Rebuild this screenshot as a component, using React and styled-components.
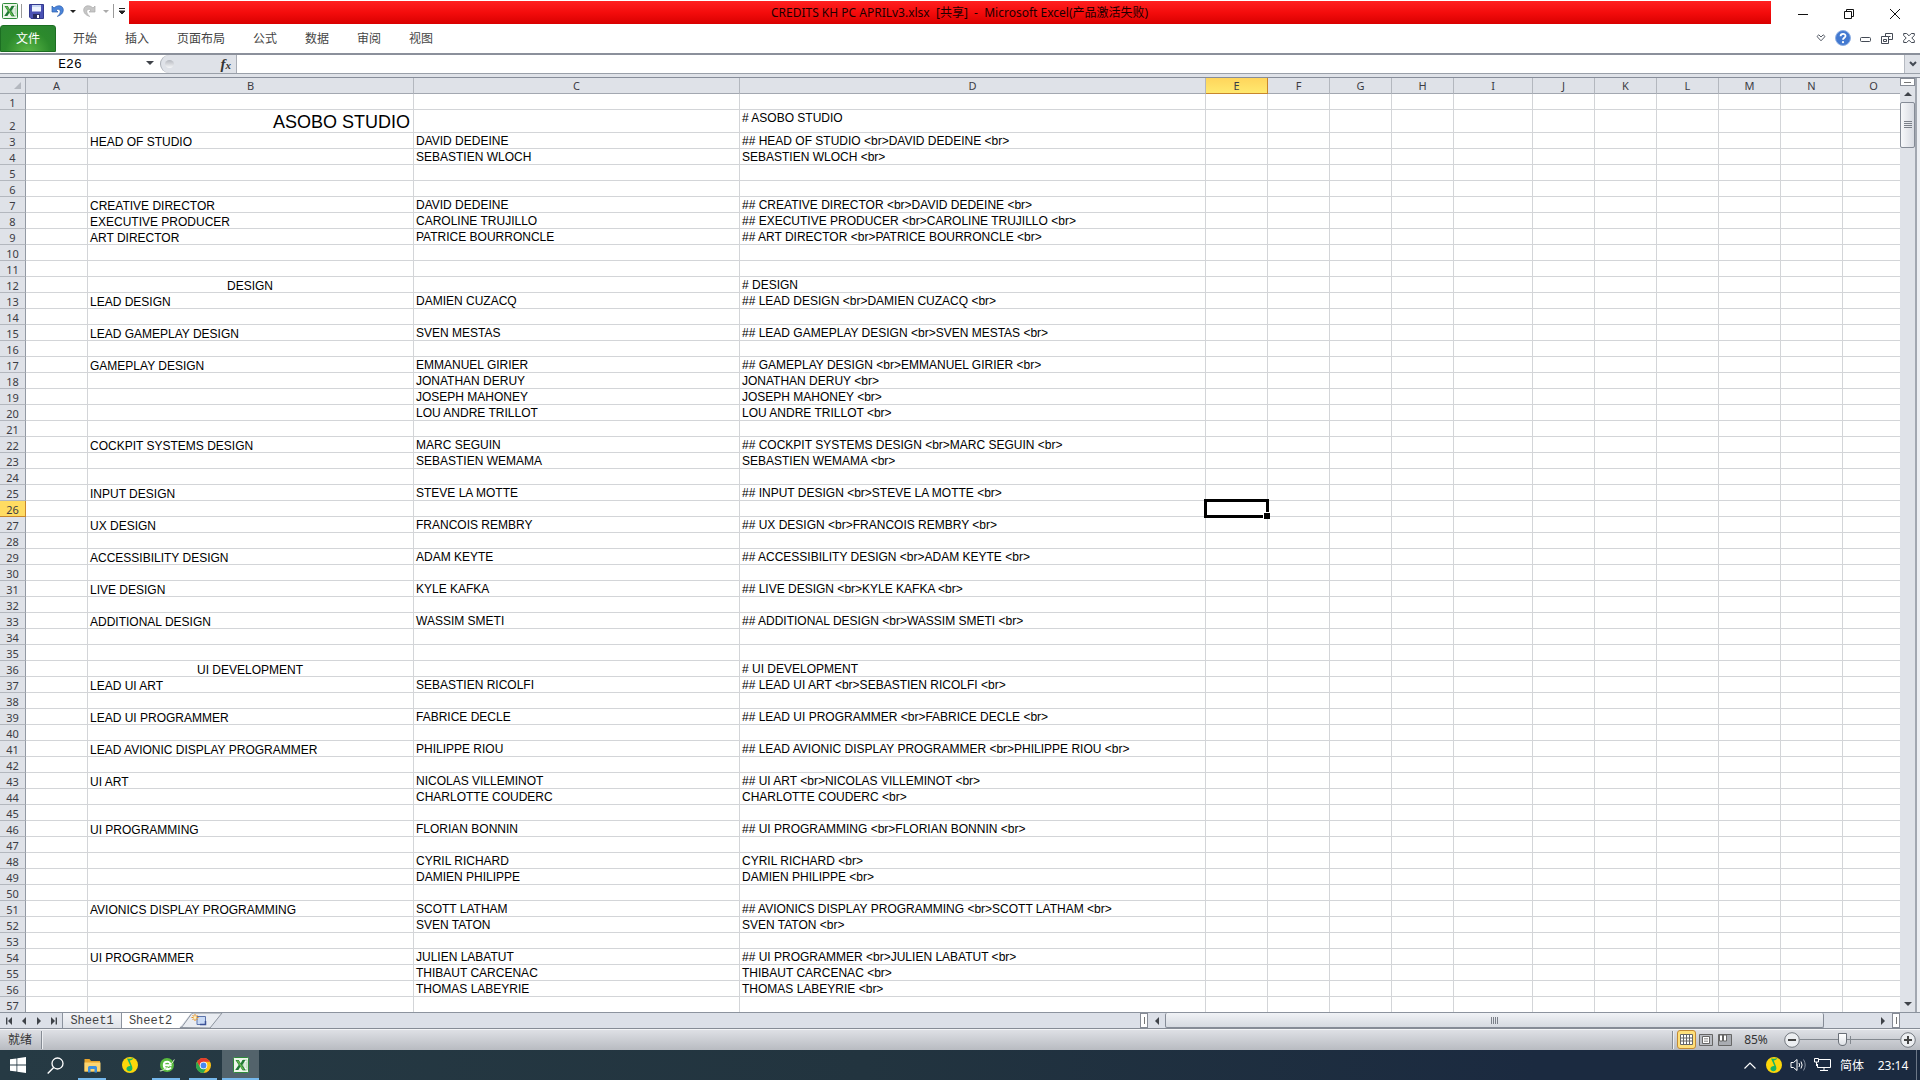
import React, { useState } from 'react';
import styled, { createGlobalStyle, css } from 'styled-components';

// data
const COLUMNS = [
  { name: 'A', width: 62 },
  { name: 'B', width: 326 },
  { name: 'C', width: 326 },
  { name: 'D', width: 466 },
  { name: 'E', width: 62 },
  { name: 'F', width: 62 },
  { name: 'G', width: 62 },
  { name: 'H', width: 62 },
  { name: 'I', width: 79 },
  { name: 'J', width: 62 },
  { name: 'K', width: 62 },
  { name: 'L', width: 62 },
  { name: 'M', width: 62 },
  { name: 'N', width: 62 },
  { name: 'O' },
];

const ROW_COUNT = 57;
const TITLE_ROW = 2;

const CREDITS = {
  2: ['ASOBO STUDIO'],
  3: ['HEAD OF STUDIO', 'DAVID DEDEINE'],
  4: ['', 'SEBASTIEN WLOCH'],
  7: ['CREATIVE DIRECTOR', 'DAVID DEDEINE'],
  8: ['EXECUTIVE PRODUCER', 'CAROLINE TRUJILLO'],
  9: ['ART DIRECTOR', 'PATRICE BOURRONCLE'],
  12: ['DESIGN'],
  13: ['LEAD DESIGN', 'DAMIEN CUZACQ'],
  15: ['LEAD GAMEPLAY DESIGN', 'SVEN MESTAS'],
  17: ['GAMEPLAY DESIGN', 'EMMANUEL GIRIER'],
  18: ['', 'JONATHAN DERUY'],
  19: ['', 'JOSEPH MAHONEY'],
  20: ['', 'LOU ANDRE TRILLOT'],
  22: ['COCKPIT SYSTEMS DESIGN', 'MARC SEGUIN'],
  23: ['', 'SEBASTIEN WEMAMA'],
  25: ['INPUT DESIGN', 'STEVE LA MOTTE'],
  27: ['UX DESIGN', 'FRANCOIS REMBRY'],
  29: ['ACCESSIBILITY DESIGN', 'ADAM KEYTE'],
  31: ['LIVE DESIGN', 'KYLE KAFKA'],
  33: ['ADDITIONAL DESIGN', 'WASSIM SMETI'],
  36: ['UI DEVELOPMENT'],
  37: ['LEAD UI ART', 'SEBASTIEN RICOLFI'],
  39: ['LEAD UI PROGRAMMER', 'FABRICE DECLE'],
  41: ['LEAD AVIONIC DISPLAY PROGRAMMER', 'PHILIPPE RIOU'],
  43: ['UI ART', 'NICOLAS VILLEMINOT'],
  44: ['', 'CHARLOTTE COUDERC'],
  46: ['UI PROGRAMMING', 'FLORIAN BONNIN'],
  48: ['', 'CYRIL RICHARD'],
  49: ['', 'DAMIEN PHILIPPE'],
  51: ['AVIONICS DISPLAY PROGRAMMING', 'SCOTT LATHAM'],
  52: ['', 'SVEN TATON'],
  54: ['UI PROGRAMMER', 'JULIEN LABATUT'],
  55: ['', 'THIBAUT CARCENAC'],
  56: ['', 'THOMAS LABEYRIE'],
};

const RIBBON_TABS = ['开始', '插入', '页面布局', '公式', '数据', '审阅', '视图'];

// column D holds the markdown made from B and C
function toMarkdown(role, person) {
  if (!person) return role ? `# ${role}` : '';
  return role ? `## ${role} <br>${person} <br>` : `${person} <br>`;
}

function getCell(column, row) {
  const [role = '', person = ''] = CREDITS[row] || [];
  if (column === 'B') return role;
  if (column === 'C') return person;
  if (column === 'D') return toMarkdown(role, person);
  return '';
}

function getAlign(column, row) {
  if (column !== 'B' || !CREDITS[row] || CREDITS[row][1]) return 'left';
  return row === TITLE_ROW ? 'right' : 'center';
}

// style
const GlobalStyle = createGlobalStyle`
  * {
    box-sizing: border-box;
  }

  body {
    margin: 0;
    overflow: hidden;
    font-family: 'Noto Sans', 'Noto Sans CJK SC', sans-serif;
    font-size: 12px;
    color: #333;
  }

  button,
  input {
    margin: 0;
    padding: 0;
    border: 0;
    background: none;
    color: inherit;
    font: inherit;
    outline: none;
  }

  svg {
    display: block;
    flex: none;
  }
`;

const Window = styled.div`
  height: 100vh;
  display: flex;
  flex-direction: column;
  background-color: #fff;
`;

const TitleBar = styled.header`
  height: 24px;
  display: flex;
  flex: none;
`;

const QuickBar = styled.div`
  width: 129px;
  display: flex;
  align-items: center;
  padding: 0 2px 2px 1px;
`;

const IconButton = styled.button`
  width: ${({ $width }) => $width || 22}px;
  height: 22px;
  display: flex;
  justify-content: center;
  align-items: center;
`;

const QuickDivider = styled.span`
  width: 1px;
  height: 14px;
  margin: 0 2px;
  background-color: #9a9a9a;
`;

const Title = styled.h1`
  flex: 1;
  margin: 1px 0 0;
  padding-left: 19px;
  color: #1c0000;
  font-size: 12px;
  font-weight: 400;
  line-height: 23px;
  text-align: center;
  white-space: pre;
  background: linear-gradient(#ff2020, #f40c0c 50%, #d90000);
`;

const WindowButtons = styled.div`
  display: flex;
  padding: 3px 2px 0 9px;
`;

const RibbonBar = styled.nav`
  height: 31px;
  display: flex;
  flex: none;
  align-items: stretch;
  padding-top: 1px;
  border-bottom: 2px solid #8b909b;
`;

const FileTab = styled.button`
  width: 56px;
  height: 27px;
  margin-right: 3px;
  padding-bottom: 2px;
  color: #fff;
  border: 1px solid #1c6e22;
  border-radius: 3px 3px 0 0;
  background: radial-gradient(ellipse at 50% 110%, #5cb947, #2c8a2c 60%, #2a8430);
`;

const RibbonTab = styled.button`
  padding: 0 14px 2px;
  color: #444;
`;

const RibbonTools = styled.div`
  display: flex;
  align-items: center;
  margin-left: auto;
  padding-bottom: 2px;
`;

const FormulaRow = styled.div`
  height: 19px;
  display: flex;
  flex: none;
  border-bottom: 1px solid #9aa0a9;
`;

const NameBox = styled.input`
  width: 140px;
  padding-top: 1px;
  color: #000;
  font-family: 'Liberation Mono', monospace;
  font-size: 13px;
  text-align: center;
`;

const FormulaTools = styled.div`
  width: 77px;
  display: flex;
  align-items: center;
  justify-content: space-between;
  padding: 0 5px 0 4px;
  border: 1px solid #a9adb5;
  border-width: 0 1px;
  border-radius: 9px 0 0 9px;
  background-color: #dfe2e8;
`;

const Knob = styled.span`
  width: 9px;
  height: 8px;
  border-radius: 50%;
  background: linear-gradient(#b5b8bf, #f6f7f9);
`;

const FxButton = styled.button`
  color: #333;
  font-family: 'Liberation Serif', serif;
  font-size: 15px;
  font-style: italic;
  font-weight: 700;
  line-height: 16px;

  small {
    font-size: 11px;
  }
`;

const FormulaInput = styled.input`
  flex: 1;
  min-width: 0;
  padding: 0 4px;
`;

const ExpandButton = styled(IconButton)`
  height: 18px;
  border-left: 1px solid #b5b9c1;
  background-color: #dfe2e8;
`;

const Workbook = styled.main`
  flex: 1;
  min-height: 0;
  display: flex;
  flex-direction: column;
  padding-top: 3px;
  background-color: #dfe2e8;
`;

const SheetArea = styled.div`
  flex: 1;
  min-height: 0;
  display: flex;
  border-top: 1px solid #878d99;
`;

const GridView = styled.div`
  flex: 1;
  min-width: 0;
  overflow: hidden;
  background-color: #fff;
`;

// the last column runs on a little under the scroll bar
const Grid = styled.table`
  width: calc(100% + 5px);
  table-layout: fixed;
  border-collapse: separate;
  border-spacing: 0;
  font-family: 'Liberation Sans', Arial, sans-serif;
`;

const headerCell = css`
  height: 16px;
  padding: 0;
  color: #3c3c44;
  font-family: 'Noto Sans', sans-serif;
  font-size: 11px;
  font-weight: 400;
  line-height: 15px;
  text-align: center;
`;

const Corner = styled.td`
  ${headerCell}
  border-right: 1px solid #a3a8b1;
  border-bottom: 1px solid #a3a8b1;
  background-color: #dfe2e8;

  svg {
    margin-left: auto;
    margin-right: 4px;
  }
`;

const ColumnHeader = styled.th`
  ${headerCell}
  border-right: 1px solid ${({ $active }) => ($active ? '#c8862c' : '#b3b7be')};
  border-bottom: 1px solid ${({ $active }) => ($active ? '#c8862c' : '#a3a8b1')};
  background: ${({ $active }) =>
    $active ? 'linear-gradient(#ffd55c, #ffe96f)' : '#dfe2e8'};
`;

const RowHeader = styled.th`
  ${headerCell}
  height: ${({ $tall }) => ($tall ? 23 : 16)}px;
  line-height: 12px;
  vertical-align: bottom;
  border-right: 1px solid ${({ $active }) => ($active ? '#c8862c' : '#9299a3')};
  border-bottom: 1px solid ${({ $active }) => ($active ? '#c8862c' : '#b3b7be')};
  background-color: ${({ $active }) => ($active ? '#ffdc62' : '#dfe2e8')};
`;

const Cell = styled.td`
  position: relative;
  padding: 1px 2px 0;
  color: #000;
  font-size: 12px;
  line-height: 14px;
  text-align: ${({ $align }) => $align};
  vertical-align: top;
  white-space: nowrap;
  border-right: 1px solid #d3d5d8;
  border-bottom: 1px solid #d3d5d8;
`;

const RoleCell = styled(Cell)`
  padding-right: 3px;
  font-size: ${({ $big }) => ($big ? 18 : 12)}px;
  line-height: ${({ $big }) => ($big ? 20 : 12)}px;
  vertical-align: bottom;
`;

const Selection = styled.span`
  position: absolute;
  inset: -2px;
  z-index: 1;
  border: 3px solid #000;

  &::after {
    content: '';
    position: absolute;
    right: -4px;
    bottom: -4px;
    width: 6px;
    height: 6px;
    border: 1px solid #fff;
    border-width: 1px 0 0 1px;
    background-color: #000;
  }
`;

const VerticalBar = styled.div`
  width: 20px;
  display: flex;
  flex-direction: column;
  padding-right: 3px;
  background-color: #edeff3;
`;

const VerticalTrack = styled.div`
  flex: 1;
  display: flex;
  flex-direction: column;
  border-right: 2px solid #a2a7b0;
  background: #dfe2e8;
`;

const SplitBox = styled.span`
  width: ${({ $vertical }) => ($vertical ? 8 : 15)}px;
  height: ${({ $vertical }) => ($vertical ? 15 : 8)}px;
  display: flex;
  flex: none;
  justify-content: center;
  align-items: center;
  border: 1px solid #868b95;
  background-color: #fff;

  &::before {
    content: '';
    width: ${({ $vertical }) => ($vertical ? 1 : 7)}px;
    height: ${({ $vertical }) => ($vertical ? 7 : 1)}px;
    background-color: #777;
  }
`;

const ArrowButton = styled.button`
  width: ${({ $width }) => $width || 15}px;
  height: 16px;
  display: flex;
  flex: none;
  justify-content: center;
  align-items: center;
`;

const VerticalThumb = styled.span`
  height: 46px;
  display: flex;
  flex: none;
  justify-content: center;
  align-items: center;
  border: 1px solid #858b96;
  border-radius: 2px;
  background: linear-gradient(90deg, #f7f8fa, #d8dbe2);
`;

const VerticalRest = styled.span`
  flex: 1;
`;

const BottomBar = styled.div`
  height: 17px;
  display: flex;
  flex: none;
  border-top: 1px solid #8c939e;
  border-bottom: 1px solid #868c96;
  background-color: #dce0e8;
`;

const SheetNav = styled.div`
  width: 62px;
  display: flex;
  align-items: center;
  padding-left: 1px;
`;

const SheetTab = styled.button`
  width: ${({ $active }) => ($active ? 57 : 60)}px;
  padding-top: 1px;
  color: #444;
  font-family: 'Liberation Mono', monospace;
  font-size: 12px;
  line-height: 14px;
  border-left: ${({ $active }) => ($active ? 0 : '1px solid #8c939e')};
  border-right: ${({ $active }) => ($active ? 0 : '1px solid #8c939e')};
  background: ${({ $active }) =>
    $active ? '#fff' : 'linear-gradient(#f4f5f8, #dfe2e8)'};
`;

const HorizontalBar = styled.div`
  width: 760px;
  display: flex;
  margin-left: auto;
  margin-right: 20px;
`;

const HorizontalThumb = styled.span`
  flex: 1;
  display: flex;
  justify-content: center;
  align-items: center;
  margin-right: 50px;
  border: 1px solid #858b96;
  border-top: 0;
  border-radius: 2px;
  background: linear-gradient(#f0f2f6, #d6dae1);
`;

const StatusRow = styled.footer`
  height: 21px;
  display: flex;
  flex: none;
  align-items: center;
  padding: 0 4px 1px 8px;
  border-top: 1px solid #f3f4f6;
  background: linear-gradient(#dee0e5, #b8bbc1);
`;

const StatusText = styled.span`
  width: 33px;
  line-height: 18px;
`;

const StatusDivider = styled.span`
  width: 2px;
  height: 18px;
  margin-right: 3px;
  border-left: 1px solid #858b94;
  border-right: 1px solid #eceef1;
`;

const StatusTools = styled.div`
  display: flex;
  align-items: center;
  margin-left: auto;
`;

const ViewButton = styled.button`
  width: 19px;
  height: 19px;
  display: flex;
  justify-content: center;
  align-items: center;
  border: 1px solid ${({ $active }) => ($active ? '#c38a35' : 'transparent')};
  border-radius: 3px;
  background: ${({ $active }) => ($active ? '#ffe07a' : 'none')};
`;

const ZoomText = styled.button`
  width: 50px;
  padding-right: 6px;
  color: #333;
`;

const RoundButton = styled.button`
  width: 16px;
  height: 16px;
`;

const ZoomSlider = styled.input`
  width: 100px;
  height: 16px;
  appearance: none;
  background: linear-gradient(#83888f, #83888f) center / 100% 1px no-repeat,
    linear-gradient(#83888f, #83888f) center / 1px 8px no-repeat;

  &::-webkit-slider-thumb {
    appearance: none;
    width: 9px;
    height: 13px;
    border: 1px solid #6a6f77;
    border-radius: 1px 1px 5px 5px;
    background: linear-gradient(#fff, #dfe2e7);
  }
`;

const TaskRow = styled.div`
  height: 30px;
  display: flex;
  flex: none;
  background: linear-gradient(90deg, #263a44, #22343f 45%, #1b2a40 80%, #1b2a40);
`;

const TaskButton = styled.button`
  width: ${({ $width }) => $width || 37}px;
  display: flex;
  justify-content: center;
  align-items: center;
  position: relative;
  background-color: ${({ $active }) => ($active ? '#53636b' : 'transparent')};

  &::after {
    content: '';
    display: ${({ $open }) => ($open ? 'block' : 'none')};
    position: absolute;
    left: ${({ $active }) => ($active ? 0 : 4)}px;
    right: ${({ $active }) => ($active ? 0 : 5)}px;
    bottom: 0;
    height: 2px;
    background-color: #76b9ed;
  }
`;

const Tray = styled.div`
  display: flex;
  align-items: center;
  margin-left: auto;
  color: #fff;
`;

const TrayButton = styled.button`
  width: ${({ $width }) => $width || 24}px;
  height: 30px;
  display: flex;
  justify-content: center;
  align-items: center;
`;

const ShowDesktop = styled.button`
  width: 4px;
  height: 30px;
  border-left: 1px solid #6c7787;
`;

// icons
function ExcelIcon() {
  return (
    <svg width="16" height="16" viewBox="0 0 16 16">
      <rect x="0.5" y="0.5" width="15" height="15" rx="1" fill="#eef7ea" stroke="#2f8b3a" />
      <path d="M10 3h4v10h-4z" fill="#fff" stroke="#8cc08c" strokeWidth="0.6" />
      <path d="M10 6h4M10 8h4M10 10h4" stroke="#8cc08c" strokeWidth="0.6" />
      <path d="M2.5 3h3.2l2 3.2L9.5 3h3L9.3 8l3.5 5.2H9.4L7.3 9.8 5.4 13H2.2l3.5-5.1z" fill="#207a33" />
      <path d="M3.4 3.5h2l6 9.2H9.6z" fill="#65b54e" />
    </svg>
  );
}

function SaveIcon() {
  return (
    <svg width="15" height="15" viewBox="0 0 15 15">
      <path d="M.5.5h14v14H2L.5 13z" fill="#4a52b4" stroke="#33398f" />
      <path d="M3 1h9v6.5H3z" fill="#eef3fd" />
      <path d="M3 1h9v2H3z" fill="#c7d6f3" />
      <path d="M4 10h7v4.5H4z" fill="#292e62" />
      <path d="M8 11h2v3H8z" fill="#fff" />
    </svg>
  );
}

function UndoIcon({ color, edge, flip }) {
  return (
    <svg width="14" height="14" viewBox="0 0 14 14">
      <g transform={flip ? 'translate(14 0) scale(-1 1)' : undefined}>
        <path
          d="M1 2v6h6L5 6.1c2-1.6 4.4-.6 4.3 1.6-.1 1.8-1.3 3.3-3 4.7 3.6-1 6-3.2 6-6.4C12.3 1.5 6.8.2 3 4z"
          fill={color}
          stroke={edge}
          strokeWidth="0.7"
        />
      </g>
    </svg>
  );
}

const ARROWS = {
  down: 'M0 0h8L4 4z',
  up: 'M0 4h8L4 0z',
  left: 'M5 0v8L1 4z',
  right: 'M1 0v8l4-4z',
};

function Arrow({ to, color = '#3f4349', size = 8 }) {
  const sideways = to === 'left' || to === 'right';
  return (
    <svg
      width={sideways ? (size * 6) / 8 : size}
      height={sideways ? size : size / 2}
      viewBox={sideways ? '0 0 6 8' : '0 0 8 4'}
    >
      <path d={ARROWS[to]} fill={color} />
    </svg>
  );
}

function StepArrow({ last }) {
  return (
    <svg width="8" height="8" viewBox="0 0 8 8">
      <g transform={last ? 'translate(8 0) scale(-1 1)' : undefined}>
        <path d="M1 .5h1.4v7H1zM7 0v8L3 4z" fill="#3f4349" />
      </g>
    </svg>
  );
}

function Grip({ vertical }) {
  return (
    <svg width="8" height="8" viewBox="0 0 8 8">
      <path
        d={vertical ? 'M.5 1v7M2.5 1v7M4.5 1v7M6.5 1v7' : 'M0 .5h8M0 2.5h8M0 4.5h8M0 6.5h8'}
        stroke="#7b8089"
      />
    </svg>
  );
}

function MusicIcon() {
  return (
    <svg width="16" height="16" viewBox="0 0 16 16">
      <circle cx="8" cy="8" r="8" fill="#fcd60a" />
      <path
        d="M5 1.4c2.5 0 3.6.8 6.5-.3-.8 1.8-2.2 2.3-3.8 2.3l2.4 6.2c.9 2.7-.2 4.4-2.3 4.6-2.2.2-3.6-1.2-3.3-2.9.3-1.6 1.9-2.6 3.9-2.3z"
        fill="#18b566"
      />
    </svg>
  );
}

function FolderIcon() {
  return (
    <svg width="17" height="15" viewBox="0 0 17 15">
      <path d="M.5 1h5L7 3h9v10.500H.5z" fill="#e8a52c" />
      <path d="M.5 4.500h16v9H.5z" fill="#fcd571" />
      <path d="M4 14.500V9.500Q4 8 5.500 8h6Q13 8 13 9.500v5h-2.500V11h-4v3.500z" fill="#3c8fdd" />
    </svg>
  );
}

function BrowserIcon() {
  return (
    <svg width="16" height="16" viewBox="0 0 16 16">
      <circle cx="8" cy="8" r="7" fill="#59bb3e" />
      <path d="M12 10.500c-2 2.700-7.200 2-7.200-2.400 0-4.300 6.800-4.500 6.800.2H5" fill="none" stroke="#fff" strokeWidth="2" />
      <path d="M.8 13.800C3 15 13 8 15.300 2.500" fill="none" stroke="#d9f0c8" strokeWidth="1" />
    </svg>
  );
}

function ChromeIcon() {
  return (
    <svg width="15" height="15" viewBox="0 0 16 16">
      <circle cx="8" cy="8" r="8" fill="#fbc116" />
      <path d="M1.070 4A8 8 0 0 1 14.930 4H8L4.540 10z" fill="#e33b2e" />
      <path d="M1.070 4A8 8 0 0 0 8 16L11.460 10H4.540z" fill="#2da94f" />
      <circle cx="8" cy="8" r="4" fill="#fff" />
      <circle cx="8" cy="8" r="3.1" fill="#4688f1" />
    </svg>
  );
}

function NewSheetTab() {
  return (
    <svg width="44" height="15" viewBox="0 0 44 15">
      <path d="M0 0h12L2 13 0 15z" fill="#fff" />
      <path d="M1 14.500q2 0 3-2L12 1.500Q13 0 14 0h29L31 15z" fill="#e9ecf1" stroke="#8c939e" />
      <path d="M18 3.500h8.500v8H18z" fill="#c9daf5" stroke="#5d74ab" />
      <path d="M21 11.500h5.500V8" fill="none" stroke="#3c5297" strokeWidth="1.5" />
      <path d="M16 1v7M12.500 4.500h7M13.500 2l5 5M18.500 2l-5 5" stroke="#e88f1c" />
      <circle cx="16" cy="4.500" r="1.500" fill="#fff3c0" />
    </svg>
  );
}

function QuickAccess() {
  return (
    <QuickBar>
      <IconButton $width={18} aria-label="Excel">
        <ExcelIcon />
      </IconButton>
      <QuickDivider />
      <IconButton $width={24} aria-label="保存">
        <SaveIcon />
      </IconButton>
      <IconButton $width={19} aria-label="撤消">
        <UndoIcon color="#4a84da" edge="#2d5fae" />
      </IconButton>
      <IconButton $width={11} aria-label="撤消列表">
        <Arrow to="down" color="#222" size={6} />
      </IconButton>
      <IconButton $width={22} aria-label="恢复">
        <UndoIcon color="#c6c6c6" edge="#aaa" flip />
      </IconButton>
      <IconButton $width={11} aria-label="恢复列表">
        <Arrow to="down" color="#aaa" size={6} />
      </IconButton>
      <QuickDivider />
      <IconButton $width={11} aria-label="自定义快速访问工具栏">
        <svg width="8" height="7" viewBox="0 0 8 7">
          <path d="M1 .5h6M1 3h6L4 6z" stroke="#222" fill="#222" />
        </svg>
      </IconButton>
    </QuickBar>
  );
}

function WindowControls() {
  return (
    <WindowButtons>
      <IconButton $width={46} aria-label="最小化">
        <svg width="10" height="10" viewBox="0 0 10 10">
          <path d="M0 5.500h10" stroke="#111" />
        </svg>
      </IconButton>
      <IconButton $width={46} aria-label="还原">
        <svg width="10" height="10" viewBox="0 0 10 10">
          <path d="M.5 2.500h7v7h-7zM2.500 2.500v-2h7v7h-2" fill="none" stroke="#111" />
        </svg>
      </IconButton>
      <IconButton $width={46} aria-label="关闭">
        <svg width="10" height="10" viewBox="0 0 10 10">
          <path d="M0 0l10 10M10 0L0 10" stroke="#111" />
        </svg>
      </IconButton>
    </WindowButtons>
  );
}

function Ribbon() {
  return (
    <RibbonBar>
      <FileTab>文件</FileTab>
      {RIBBON_TABS.map((tab) => (
        <RibbonTab key={tab}>{tab}</RibbonTab>
      ))}
      <RibbonTools>
        <IconButton aria-label="功能区最小化">
          <svg width="10" height="8" viewBox="0 0 10 8">
            <path d="M1 2.500L2.800.8 5 3 7.200.8 9 2.500 5 6.800z" fill="#fff" stroke="#555b66" />
          </svg>
        </IconButton>
        <IconButton aria-label="帮助">
          <svg width="16" height="16" viewBox="0 0 16 16">
            <circle cx="8" cy="8" r="7.500" fill="#4379d0" stroke="#8fb0e4" />
            <path d="M5.600 6.200c0-3.200 5-3.100 4.900-.2C10.400 7.700 8 7.700 8 9.700" fill="none" stroke="#fff" strokeWidth="1.8" />
            <circle cx="8" cy="12.200" r="1.100" fill="#fff" />
          </svg>
        </IconButton>
        <IconButton aria-label="最小化窗口">
          <svg width="11" height="9" viewBox="0 0 11 9">
            <rect x="0.5" y="3.5" width="10" height="4" rx="1" fill="#fff" stroke="#444a55" />
          </svg>
        </IconButton>
        <IconButton aria-label="还原窗口">
          <svg width="12" height="11" viewBox="0 0 12 11">
            <path d="M4.500.5h7v6h-7z" fill="#fff" stroke="#444a55" />
            <path d="M7.500 3.500h2" stroke="#444a55" />
            <path d="M.5 3.500h7v7h-7z" fill="#fff" stroke="#444a55" />
            <path d="M2.500 6.500h3v2h-3z" fill="#fff" stroke="#444a55" />
          </svg>
        </IconButton>
        <IconButton aria-label="关闭窗口">
          <svg width="12" height="10" viewBox="0 0 12 10">
            <path
              d="M.7.5h3L6 2.800 8.300.5h3v2L8.800 5l2.500 2.500v2h-3L6 7.200 3.700 9.500h-3v-2L3.200 5 .7 2.500z"
              fill="#fff"
              stroke="#444a55"
            />
          </svg>
        </IconButton>
      </RibbonTools>
    </RibbonBar>
  );
}

function FormulaBar() {
  return (
    <FormulaRow>
      <NameBox aria-label="名称框" defaultValue="E26" />
      <ArrowButton $width={20} aria-label="名称列表">
        <Arrow to="down" />
      </ArrowButton>
      <FormulaTools>
        <Knob />
        <FxButton aria-label="插入函数">
          f<small>x</small>
        </FxButton>
      </FormulaTools>
      <FormulaInput aria-label="编辑栏" />
      <ExpandButton $width={16} aria-label="展开编辑栏">
        <svg width="8" height="6" viewBox="0 0 8 6">
          <path d="M1 1l3 3 3-3" fill="none" stroke="#444a54" strokeWidth="2" />
        </svg>
      </ExpandButton>
    </FormulaRow>
  );
}

function Sheet() {
  const [selected, setSelected] = useState({ column: 'E', row: 26 });
  const rows = Array.from({ length: ROW_COUNT }, (_, i) => i + 1);

  return (
    <GridView>
      <Grid>
        <colgroup>
          <col width={26} />
          {COLUMNS.map(({ name, width }) => (
            <col key={name} width={width} />
          ))}
        </colgroup>
        <thead>
          <tr>
            <Corner>
              <svg width="7" height="7" viewBox="0 0 7 7">
                <path d="M7 0v7H0z" fill="#b4b8bf" />
              </svg>
            </Corner>
            {COLUMNS.map(({ name }) => (
              <ColumnHeader key={name} scope="col" $active={name === selected.column}>
                {name}
              </ColumnHeader>
            ))}
          </tr>
        </thead>
        <tbody>
          {rows.map((row) => (
            <tr key={row}>
              <RowHeader scope="row" $active={row === selected.row} $tall={row === TITLE_ROW}>
                {row}
              </RowHeader>
              {COLUMNS.map(({ name }) => {
                const SheetCell = name === 'B' ? RoleCell : Cell;
                return (
                  <SheetCell
                    key={name}
                    $align={getAlign(name, row)}
                    $big={row === TITLE_ROW}
                    onClick={() => setSelected({ column: name, row })}
                  >
                    {getCell(name, row)}
                    {name === selected.column && row === selected.row && <Selection />}
                  </SheetCell>
                );
              })}
            </tr>
          ))}
        </tbody>
      </Grid>
    </GridView>
  );
}

function VerticalScroll() {
  return (
    <VerticalBar>
      <VerticalTrack>
        <SplitBox />
        <ArrowButton aria-label="向上">
          <Arrow to="up" />
        </ArrowButton>
        <VerticalThumb>
          <Grip />
        </VerticalThumb>
        <VerticalRest />
        <ArrowButton aria-label="向下">
          <Arrow to="down" />
        </ArrowButton>
      </VerticalTrack>
    </VerticalBar>
  );
}

function SheetBar() {
  return (
    <BottomBar>
      <SheetNav>
        <ArrowButton aria-label="第一张">
          <StepArrow />
        </ArrowButton>
        <ArrowButton aria-label="上一张">
          <Arrow to="left" />
        </ArrowButton>
        <ArrowButton aria-label="下一张">
          <Arrow to="right" />
        </ArrowButton>
        <ArrowButton aria-label="最后一张">
          <StepArrow last />
        </ArrowButton>
      </SheetNav>
      <SheetTab>Sheet1</SheetTab>
      <SheetTab $active>Sheet2</SheetTab>
      <NewSheetTab />
      <HorizontalBar>
        <SplitBox $vertical />
        <ArrowButton $width={17} aria-label="向左">
          <Arrow to="left" />
        </ArrowButton>
        <HorizontalThumb>
          <Grip vertical />
        </HorizontalThumb>
        <ArrowButton $width={18} aria-label="向右">
          <Arrow to="right" />
        </ArrowButton>
        <SplitBox $vertical />
      </HorizontalBar>
    </BottomBar>
  );
}

function ZoomButton({ label, plus }) {
  return (
    <RoundButton aria-label={label}>
      <svg width="16" height="16" viewBox="0 0 16 16">
        <circle cx="8" cy="8" r="7.300" fill="#eceef1" stroke="#73787f" />
        <path d={plus ? 'M4 8h8M8 4v8' : 'M4 8h8'} stroke="#444" strokeWidth="2" />
      </svg>
    </RoundButton>
  );
}

function StatusBar() {
  return (
    <StatusRow>
      <StatusText>就绪</StatusText>
      <StatusDivider />
      <StatusTools>
        <StatusDivider />
        <ViewButton $active aria-label="普通">
          <svg width="13" height="11" viewBox="0 0 13 11">
            <path d="M.5.5h12v10H.5zM.5 4h12M.5 7h12M3.500.5v10M6.500.5v10M9.500.5v10" fill="#fff" stroke="#666" />
          </svg>
        </ViewButton>
        <ViewButton aria-label="页面布局视图">
          <svg width="14" height="12" viewBox="0 0 14 12">
            <path d="M.5.5h13v11H.5z" fill="#b9bcc2" stroke="#666" />
            <path d="M3.500 2.500h7v7h-7z" fill="#fff" stroke="#666" />
            <path d="M5 4.500h4M5 6h4M5 7.500h4" stroke="#888" strokeWidth="0.7" />
          </svg>
        </ViewButton>
        <ViewButton aria-label="分页预览">
          <svg width="14" height="12" viewBox="0 0 14 12">
            <path d="M.5.5h13v11H.5z" fill="#a9acb2" stroke="#666" />
            <path d="M1.500 1h3v6h-3zM5.500 1h3v6h-3z" fill="#fff" stroke="#666" />
          </svg>
        </ViewButton>
        <ZoomText>85%</ZoomText>
        <ZoomButton label="缩小" />
        <ZoomSlider type="range" min="10" max="190" defaultValue="85" aria-label="显示比例" />
        <ZoomButton label="放大" plus />
      </StatusTools>
    </StatusRow>
  );
}

function Taskbar() {
  return (
    <TaskRow>
      <TaskButton $width={36} aria-label="开始菜单">
        <svg width="16" height="16" viewBox="0 0 16 16">
          <path d="M0 2.300L6.500 1.400v6.200H0zM7.300 1.300L16 0v7.600H7.300zM0 8.400h6.500v6.200L0 13.700zM7.300 8.400H16V16l-8.700-1.300z" fill="#fff" />
        </svg>
      </TaskButton>
      <TaskButton $width={38} aria-label="搜索">
        <svg width="17" height="17" viewBox="0 0 17 17">
          <circle cx="10.500" cy="6.500" r="5.500" fill="none" stroke="#fff" strokeWidth="1.3" />
          <path d="M6.700 10.400L.7 16.400" stroke="#fff" strokeWidth="1.4" />
        </svg>
      </TaskButton>
      <TaskButton $open aria-label="文件资源管理器">
        <FolderIcon />
      </TaskButton>
      <TaskButton aria-label="音乐">
        <MusicIcon />
      </TaskButton>
      <TaskButton $open aria-label="浏览器">
        <BrowserIcon />
      </TaskButton>
      <TaskButton $open aria-label="Chrome">
        <ChromeIcon />
      </TaskButton>
      <TaskButton $open $active aria-label="Excel 窗口">
        <ExcelIcon />
      </TaskButton>
      <Tray>
        <TrayButton aria-label="隐藏的图标">
          <svg width="12" height="7" viewBox="0 0 12 7">
            <path d="M.5 6.500L6 1l5.500 5.500" fill="none" stroke="#fff" strokeWidth="1.2" />
          </svg>
        </TrayButton>
        <TrayButton aria-label="音乐托盘">
          <MusicIcon />
        </TrayButton>
        <TrayButton aria-label="音量">
          <svg width="17" height="14" viewBox="0 0 17 14">
            <path d="M1 4.500h2.500L7 1.500v11L3.500 9.500H1z" fill="none" stroke="#fff" />
            <path d="M9 5q1.200 2 0 4M11 3.500q2.200 3.500 0 7" fill="none" stroke="#fff" />
            <path d="M13.500 1.500q3.400 5.500 0 11" fill="none" stroke="#8a94a3" />
          </svg>
        </TrayButton>
        <TrayButton aria-label="网络">
          <svg width="17" height="14" viewBox="0 0 17 14">
            <path d="M5 1.500h11.500v8H3.500V6M10 9.500v3M6 12.500h8" fill="none" stroke="#fff" />
            <path d="M.5.500h4v3.500h-4zM2.500 4v4" fill="#1b2a40" stroke="#fff" />
          </svg>
        </TrayButton>
        <TrayButton $width={36}>简体</TrayButton>
        <TrayButton $width={46}>23:14</TrayButton>
        <ShowDesktop aria-label="显示桌面" />
      </Tray>
    </TaskRow>
  );
}

function App() {
  return (
    <Window>
      <GlobalStyle />
      <TitleBar>
        <QuickAccess />
        <Title>{'CREDITS KH PC APRILv3.xlsx  [共享]  -  Microsoft Excel(产品激活失败)'}</Title>
        <WindowControls />
      </TitleBar>
      <Ribbon />
      <FormulaBar />
      <Workbook>
        <SheetArea>
          <Sheet />
          <VerticalScroll />
        </SheetArea>
        <SheetBar />
      </Workbook>
      <StatusBar />
      <Taskbar />
    </Window>
  );
}

export default App;
